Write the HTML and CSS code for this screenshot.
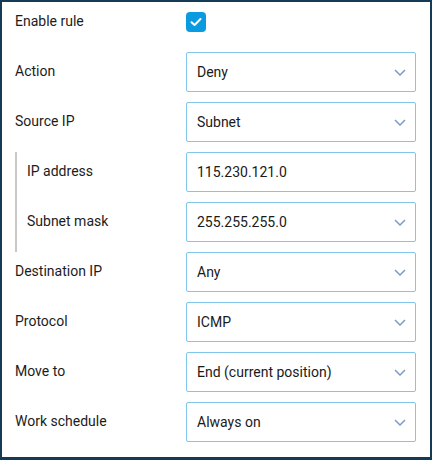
FILE: index.html
```html
<!DOCTYPE html>
<html>
<head>
<meta charset="utf-8">
<link rel="stylesheet" href="styles.css">
</head>
<body>
<div class="panel">
  <div class="row">
    <div class="label">Enable rule</div>
    <div class="control">
      <span class="checkbox"><svg width="12" height="10" viewBox="0 0 12 10"><path d="M1.5 5.2 L4.6 8 L10.5 2" fill="none" stroke="#fff" stroke-width="2" stroke-linecap="round" stroke-linejoin="round"/></svg></span>
    </div>
  </div>
  <div class="row">
    <div class="label">Action</div>
    <div class="control"><div class="field select">Deny<svg class="chev" width="12" height="7" viewBox="0 0 12 7"><path d="M1 1 L6 6 L11 1" fill="none" stroke="#7b9cc4" stroke-width="1.5"/></svg></div></div>
  </div>
  <div class="row">
    <div class="label">Source IP</div>
    <div class="control"><div class="field select">Subnet<svg class="chev" width="12" height="7" viewBox="0 0 12 7"><path d="M1 1 L6 6 L11 1" fill="none" stroke="#7b9cc4" stroke-width="1.5"/></svg></div></div>
  </div>
  <div class="group">
    <div class="row sub">
      <div class="label">IP address</div>
      <div class="control"><div class="field">115.230.121.0</div></div>
    </div>
    <div class="row sub">
      <div class="label">Subnet mask</div>
      <div class="control"><div class="field select">255.255.255.0<svg class="chev" width="12" height="7" viewBox="0 0 12 7"><path d="M1 1 L6 6 L11 1" fill="none" stroke="#7b9cc4" stroke-width="1.5"/></svg></div></div>
    </div>
  </div>
  <div class="row">
    <div class="label">Destination IP</div>
    <div class="control"><div class="field select">Any<svg class="chev" width="12" height="7" viewBox="0 0 12 7"><path d="M1 1 L6 6 L11 1" fill="none" stroke="#7b9cc4" stroke-width="1.5"/></svg></div></div>
  </div>
  <div class="row">
    <div class="label">Protocol</div>
    <div class="control"><div class="field select">ICMP<svg class="chev" width="12" height="7" viewBox="0 0 12 7"><path d="M1 1 L6 6 L11 1" fill="none" stroke="#7b9cc4" stroke-width="1.5"/></svg></div></div>
  </div>
  <div class="row">
    <div class="label">Move to</div>
    <div class="control"><div class="field select">End (current position)<svg class="chev" width="12" height="7" viewBox="0 0 12 7"><path d="M1 1 L6 6 L11 1" fill="none" stroke="#7b9cc4" stroke-width="1.5"/></svg></div></div>
  </div>
  <div class="row">
    <div class="label">Work schedule</div>
    <div class="control"><div class="field select">Always on<svg class="chev" width="12" height="7" viewBox="0 0 12 7"><path d="M1 1 L6 6 L11 1" fill="none" stroke="#7b9cc4" stroke-width="1.5"/></svg></div></div>
  </div>
</div>
</body>
</html>
```
FILE: styles.css
```css
html, body {
  margin: 0;
  padding: 0;
  background: #fff;
}
.panel {
  box-sizing: border-box;
  width: 432px;
  height: 460px;
  border-style: solid;
  border-color: #143a55;
  border-width: 2px 2px 3px 2px;
  padding: 0 14px 0 13px;
  font-family: Roboto, "Liberation Sans", sans-serif;
  font-size: 14px;
  color: #1c1c1c;
  background: #fff;
}
.row {
  display: flex;
  align-items: center;
  height: 40px;
  padding-bottom: 10px;
}
.label {
  width: 171px;
  flex: none;
  padding-bottom: 2px;
}
.group {
  border-left: 2px solid #c8c8c8;
}
.row.sub {
  padding-left: 10px;
}
.row.sub .label {
  width: 159px;
}
.control {
  flex: 1;
  display: flex;
  align-items: center;
  height: 40px;
}
.checkbox {
  width: 20px;
  height: 20px;
  border-radius: 4px;
  background: #0a9ae0;
  display: flex;
  align-items: center;
  justify-content: center;
}
.field {
  box-sizing: border-box;
  width: 100%;
  height: 40px;
  border: 1px solid #80c6ea;
  border-radius: 2px;
  padding: 0 10px;
  display: flex;
  align-items: center;
  justify-content: space-between;
  color: #1a1a1a;
}
.chev {
  margin-right: -1px;
}
```
